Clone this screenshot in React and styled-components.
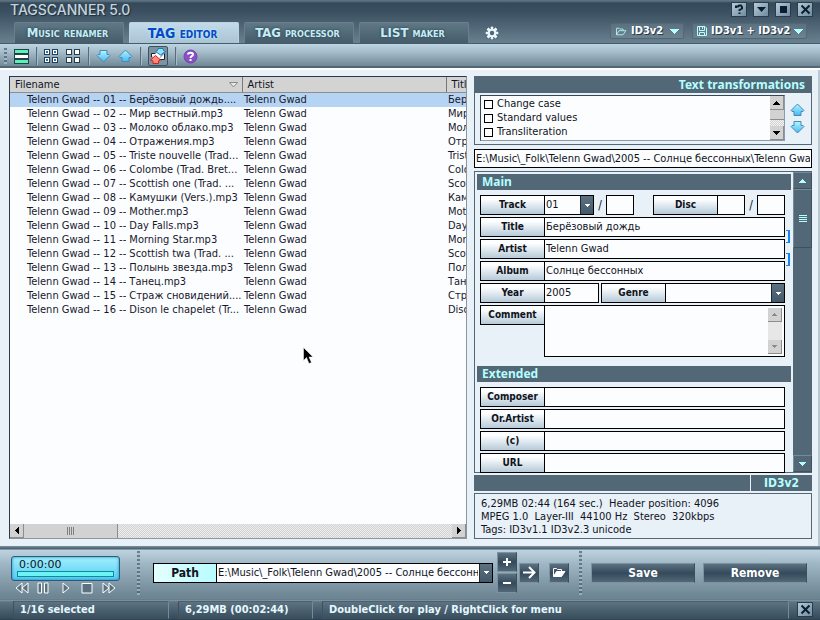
import React from "react";
import styled, { createGlobalStyle, css } from "styled-components";

const UI = `"DejaVu Sans Condensed", "Noto Sans", sans-serif`;
const HEADING = `"Noto Sans", sans-serif`;

const Global = createGlobalStyle`
  * { box-sizing: border-box; }
  body { margin: 0; font: 11px/14px ${UI}; color: #10131c; }
  button, input, select, textarea { font: inherit; color: inherit; margin: 0; padding: 0; border: 0; border-radius: 0; background: none; min-width: 0; outline: none; }
  button { cursor: default; }
  svg { display: block; flex: none; }
`;

const slate = "#536876";
const mint = "#b4ffff";

const Window = styled.div`
  min-height: 100vh;
  display: flex;
  flex-direction: column;
  background: #e8f0f8;
`;

/* ---------- header ---------- */
const Header = styled.header`
  height: 44px;
  display: flex;
  justify-content: space-between;
  background: linear-gradient(#5c7280 0, #5c7280 1px, #34495a 3px, #3b5060 12px, #6b8292 44px);
  border-bottom: 1px solid #475c6a;
`;
const HeaderSide = styled.div`
  display: flex;
  flex-direction: column;
  justify-content: space-between;
  align-items: ${(p) => (p.$right ? "flex-end" : "stretch")};
  padding: ${(p) => (p.$right ? "3px 8px 4px 0" : "2px 0 0 10px")};
`;
const Brand = styled.h1`
  margin: 0;
  font: 500 14px/16px Inter, sans-serif;
  color: #c3d3de;
  text-shadow: 1px 1px 1px #1b2b38;
`;
const Tabs = styled.nav`
  display: flex;
  gap: 5px;
  padding-left: 4px;
`;
const Tab = styled.button`
  && { padding-right: 3px; }
  width: 110px;
  height: 21px;
  font: bold ${(p) => (p.$active ? 14 : 13)}px/20px ${UI};
  font-variant: small-caps;
  color: ${(p) => (p.$active ? "#0848c8" : "#c4eef6")};
  text-shadow: ${(p) => (p.$active ? "0 0 3px #c0ffff" : "0 0 3px #203848")};
  background: ${(p) => (p.$active ? "linear-gradient(#c2dae9, #a9c4d4)" : "linear-gradient(#607886, #465c6a)")};
  border: 1px solid ${(p) => (p.$active ? "#bcd4e2" : "#687f8e")};
  border-bottom: 0;
  border-radius: 2px 2px 0 0;
`;
const GearButton = styled.button`
  && { margin-left: 10px; }
`;
const WinButtons = styled.div`
  display: flex;
  gap: 8px;
`;
const WinButton = styled.button`
  width: 14px;
  height: 13px;
  display: grid;
  place-items: center;
  && { color: #0b1c35; background: linear-gradient(135deg, #b6cbd9, #6f8b9c); }
  box-shadow: 0 0 0 1px #293c4b;
`;
const Modes = styled.div`
  display: flex;
  gap: 8px;
  margin-right: 5px;
`;
const Mode = styled.button`
  height: 16px;
  display: flex;
  align-items: center;
  gap: 4px;
  width: ${(p) => p.$w}px;
  white-space: nowrap;
  && {
    padding: 0 4px;
    font-weight: bold;
    color: #fff;
    text-shadow: 1px 1px 0 #283a48;
    background: linear-gradient(#5b7180, #6d8392);
    border: 1px solid #526875;
    border-radius: 2px;
  }
  svg { color: ${mint}; }
  svg:last-child { margin-left: auto; }
`;

/* ---------- toolbar ---------- */
const Toolbar = styled.div`
  height: 26px;
  display: flex;
  align-items: center;
  padding: 0 4px;
  gap: 7px;
  background: linear-gradient(#bdd4e2 0, #a5bdcb 8px, #718997 22px);
  border-bottom: 2px solid #fff;
  box-shadow: inset 0 -2px 0 #536876;
`;
const Tool = styled.button`
  width: ${(p) => (p.$on ? 20 : 15)}px;
  height: 20px;
  display: grid;
  place-items: center;
  ${(p) => p.$on && css`&& { background: #7d93a2; border: 1px solid #3e5361; border-radius: 2px; }`}
`;
const Divider = styled.i`
  width: 1px;
  height: 18px;
  background: #566c7a;
  box-shadow: 1px 0 0 #a7bdca;
`;
const Grip = styled.i`
  width: 3px;
  height: ${(p) => p.$h}px;
  background: repeating-linear-gradient(#485d6b 0 2px, #a9bfcc 2px 4px);
  opacity: 0.7;
`;

/* ---------- main ---------- */
const Main = styled.main`
  flex: 1;
  display: grid;
  grid-template-columns: minmax(0, 1fr) 338px;
  gap: 7px;
  padding: 6px 8px 7px 9px;
  box-shadow: inset -2px 0 0 #b9c9d4;
`;
const FilePane = styled.section`
  display: flex;
  flex-direction: column;
  overflow: hidden;
  background: #fcfdff;
  border: 1px solid #8a97a2;
  border-top-color: #2c3a46;
  border-left-color: #2c3a46;
`;
const TableArea = styled.div`
  flex: 1;
  overflow: hidden;
`;
const Files = styled.table`
  width: 100%;
  table-layout: fixed;
  border-collapse: collapse;
`;
const HeadCell = styled.th`
  ${(p) => p.$w && `width: ${p.$w}px; border-right: 1px solid #777;`}
  height: 15px;
  padding: 1px 4px 0 5px;
  overflow: hidden;
  text-align: left;
  font-weight: normal;
  background: #d3d3d3;
  border-bottom: 1px solid #8e8e8e;
  line-height: 13px;
`;
const HeadText = styled.span`
  display: flex;
  justify-content: space-between;
  align-items: center;
`;
const FileRow = styled.tr`
  background: ${(p) => (p.$selected ? "#b5d3f2" : "transparent")};
`;
const Cell = styled.td`
  height: 14px;
  line-height: 14px;
  padding: 0 0 0 ${(p) => (p.$first ? 17 : 2)}px;
  overflow: hidden;
  white-space: nowrap;
  color: #17182c;
`;
const HScroll = styled.div`
  height: 14px;
  display: flex;
  background: repeating-conic-gradient(#d2d2d2 0 25%, #ededed 0 50%) 0 0 / 2px 2px;
`;
const ScrollBtn = styled.button`
  width: 14px;
  height: 14px;
  display: grid;
  place-items: center;
  && {
    background: #d2d2d2;
    border-right: 1px solid #8d8d8d;
    border-bottom: 1px solid #8d8d8d;
    color: ${(p) => (p.$dim ? "#8a8a8a" : "#000")};
  }
`;
const HThumb = styled.div`
  width: 94px;
  margin-right: auto;
  display: grid;
  place-items: center;
  background: #d2d2d2;
  border-right: 1px solid #8d8d8d;
`;

const Side = styled.section`
  display: flex;
  flex-direction: column;
`;
const Transform = styled.div`
  border: 1px solid ${slate};
`;
const Bar = styled.h2`
  margin: 0;
  height: 16px;
  padding: 0 6px 0 5px;
  font: bold 12px/16px ${HEADING};
  color: ${mint};
  background: ${slate};
  text-align: ${(p) => (p.$right ? "right" : "left")};
`;
const TransformBody = styled.div`
  display: flex;
  padding: 2px 5px 3px;
  gap: 4px;
`;
const OptionBox = styled.div`
  flex: 1;
  display: flex;
  height: 46px;
  background: #fcfdff;
  border: 1px solid #8b9ba8;
  border-top-color: #35485a;
  border-left-color: #35485a;
`;
const Options = styled.div`
  flex: 1;
  padding: 1px 3px;
`;
const Option = styled.label`
  height: 14px;
  display: flex;
  align-items: center;
  gap: 4px;
`;
const Check = styled.input`
  appearance: none;
  width: 9px;
  height: 9px;
  && { border: 1px solid #000; background: #fff; }
`;
const VScroll = styled.div`
  width: 14px;
  display: flex;
  flex-direction: column;
  justify-content: space-between;
  background: ${(p) => (p.$plain ? "#e7e7e7" : "repeating-conic-gradient(#d2d2d2 0 25%, #f2f2f2 0 50%) 0 0 / 2px 2px")};
`;
const VThumb = styled.div`
  height: 10px;
  margin-bottom: auto;
  background: #d2d2d2;
  border-bottom: 1px solid #8d8d8d;
`;
const MoveButtons = styled.div`
  width: 17px;
  display: flex;
  flex-direction: column;
  align-items: center;
  justify-content: center;
  gap: 3px;
`;
const PathField = styled.input`
  && {
    height: 19px;
    margin: 4px 0 3px;
    padding: 0 1px;
    background: #fcfdff;
    border: 1px solid #000;
  }
`;
const Editor = styled.div`
  flex: 1;
  display: flex;
  border: 1px solid ${slate};
  border-right: 0;
`;
const Form = styled.form`
  flex: 1;
  min-width: 0;
  padding: 2px 2px 0;
  display: flex;
  flex-direction: column;
`;
const Group = styled.div`
  display: flex;
  flex-direction: column;
  gap: 2px;
  padding: 5px 6px ${(p) => (p.$last ? 0 : 9)}px 3px;
  ${(p) => p.$last && "margin-bottom: -1px;"}
`;
const Row = styled.div`
  display: flex;
  align-items: ${(p) => (p.$top ? "flex-start" : "stretch")};
  height: ${(p) => (p.$top ? 52 : 20)}px;
`;
const Caption = styled.label`
  width: 65px;
  height: 20px;
  flex: none;
  margin-left: ${(p) => p.$gap || 0}px;
  border: 1px solid #000;
  background: linear-gradient(#fcfeff 20%, #b6cad8);
  text-align: center;
  font: bold 10px/17px ${UI};
`;
const Field = styled.input`
  && {
    ${(p) => (p.$w ? `width: ${p.$w}px;` : "flex: 1;")}
    padding: 0 1px;
    background: #fcfdff;
    border: 1px solid #000;
    ${(p) => !p.$free && "border-left: 0;"}
  }
`;
const Slash = styled.span`
  width: 12px;
  padding-top: 3px;
  text-align: center;
  font-size: 12px;
`;
const Combo = styled.div`
  ${(p) => (p.$w ? `width: ${p.$w}px;` : "flex: 1;")}
  min-width: 0;
  display: flex;
  background: #fcfdff;
  border: 1px solid #000;
  border-left: 0;
`;
const ComboInput = styled.input`
  && { flex: 1; width: 0; padding: 0 1px; }
`;
const ComboButton = styled.button`
  width: 13px;
  display: grid;
  place-items: center;
  && { color: #fff; background: linear-gradient(#5d7280, #44586a); border-left: 1px solid #1c2a35; }
`;
const Comment = styled.div`
  flex: 1;
  height: 52px;
  display: flex;
  margin-left: -1px;
  padding: 2px;
  background: #fcfdff;
  border: 1px solid #000;
`;
const CommentText = styled.textarea`
  flex: 1;
  resize: none;
`;
const Rail = styled.div`
  width: 19px;
  display: flex;
  flex-direction: column;
  background: ${slate};
  color: ${mint};
`;
const RailPart = styled.button`
  height: ${(p) => p.$h}px;
  display: grid;
  place-items: center;
  && { border: 1px solid #3d515f; border-top-color: #768b99; border-left-color: #768b99; }
  &&:last-child { margin-top: auto; }
`;
const Format = styled.div`
  height: 16px;
  margin: 2px 0;
  display: flex;
  justify-content: flex-end;
  background: ${slate};
`;
const FormatName = styled.span`
  width: 62px;
  border-left: 1px solid #e8f0f8;
  text-align: center;
  font: bold 12px/16px ${UI};
  color: ${mint};
`;
const Info = styled.p`
  margin: 0;
  padding: 3px 5px 2px 6px;
  line-height: 13px;
  border: 1px solid ${slate};
  white-space: pre-line;
`;
/* brackets that join neighbouring fields, drawn over the form edge */
const Linked = styled.div`
  position: relative;
  display: flex;
  flex-direction: column;
  gap: 2px;
`;
const Bracket = styled.span`
  position: absolute;
  right: -5px;
  top: ${(p) => p.$top}px;
  width: 4px;
  height: 13px;
  border: 1px solid #1684f0;
  border-left: 0;
  border-right-width: 2px;
`;

/* ---------- bottom ---------- */
const Dock = styled.section`
  height: 53px;
  display: flex;
  align-items: center;
  padding: 0 13px 0 11px;
  background: linear-gradient(#7c919f 0, #465b69 3px, #bdd3e0 4px, #9fb6c4 18px, #6e8594 50px);
`;
const Player = styled.div`
  width: 109px;
  margin: 6px 17px 0 0;
`;
const Lcd = styled.div`
  height: 25px;
  padding: 1px 7px;
  display: flex;
  flex-direction: column;
  justify-content: space-between;
  background: linear-gradient(#9ff0fb, #57cbf6);
  border: 1px solid #275e80;
  border-radius: 3px;
  box-shadow: inset 0 0 3px #2a7fae;
  font: 11px/13px "DejaVu Sans", sans-serif;
`;
const Seek = styled.span`
  height: 6px;
  margin: 0 -2px 2px;
  background: #6df2f5;
  border: 1px solid #0b8d96;
`;
const Transport = styled.div`
  display: flex;
  justify-content: space-between;
  padding: 1px 4px 0;
`;
const PathCombo = styled.div`
  flex: 1;
  min-width: 0;
  display: flex;
  height: 20px;
  margin-left: 13px;
`;
const PathLabel = styled.label`
  width: 64px;
  flex: none;
  text-align: center;
  font: bold 12px/18px ${UI};
  border: 1px solid #000;
  background: linear-gradient(90deg, #e4ffff, #b8fcff);
`;
const Stack = styled.div`
  display: flex;
  flex-direction: column;
  gap: 1px;
  margin: 0 2px 0 4px;
`;
const DarkButton = styled.button`
  height: 20px;
  width: ${(p) => p.$w || 20}px;
  display: grid;
  place-items: center;
  && {
    margin: 0 ${(p) => p.$mr || 0}px 0 ${(p) => p.$ml || 0}px;
    font: bold 12px/18px ${UI};
    color: #fff;
    background: linear-gradient(#5c7281, #34495a 50%, #536978);
    border: 1px solid #7c92a0;
    border-right-color: #3b4f5d;
  }
`;
const Status = styled.footer`
  height: 22px;
  display: flex;
  align-items: center;
  gap: 9px;
  padding: 0 8px 1px 13px;
  font: bold 11px/18px ${UI};
  color: #e6f8ff;
  background: linear-gradient(#4c6170 0, #8299a7 1px, #5d7382 3px, #34495a 20px, #1d2c38 22px);
`;
const StatusCell = styled.span`
  ${(p) => (p.$w ? `width: ${p.$w}px;` : "flex: 1;")}
  height: 18px;
  padding: 0 6px;
  white-space: nowrap;
  border: 1px solid #3d515f;
  border-right-color: #758b99;
  border-top-color: #4c6170;
  line-height: 16px;
  background: linear-gradient(#5d7382, #3a4f5e);
`;

/* ---------- drawings ---------- */
const Tri = ({ dir = "down", w = 7, h = 4 }) => (
  <svg width={w} height={h} viewBox={`0 0 ${w} ${h}`} fill="currentColor" shapeRendering="crispEdges">
    {dir === "down" && <path d={`M0 0H${w}L${w / 2} ${h}Z`} />}
    {dir === "up" && <path d={`M0 ${h}H${w}L${w / 2} 0Z`} />}
    {dir === "left" && <path d={`M${w} 0V${h}L0 ${h / 2}Z`} />}
    {dir === "right" && <path d={`M0 0V${h}L${w} ${h / 2}Z`} />}
  </svg>
);
const Arrow = ({ up }) => (
  <svg width="15" height="14" viewBox="0 0 15 14">
    <defs>
      <linearGradient id="sky" x1="0" x2="0" y1="0" y2="1">
        <stop offset="0" stopColor="#b4f6ff" />
        <stop offset="1" stopColor="#44b8f4" />
      </linearGradient>
    </defs>
    <path
      d={up ? "M7.500 1 14 7.500 13 8.500H11V12.500H4V8.500H2L1 7.500Z" : "M7.500 13 14 6.500 13 5.500H11V1.500H4V5.500H2L1 6.500Z"}
      fill="url(#sky)"
      stroke="#4a88b4"
    />
  </svg>
);
const ListIcon = () => (
  <svg width="15" height="15" shapeRendering="crispEdges">
    {[["#56f4b0", 0], ["#fff", 5], ["#56f4b0", 10]].map(([c, y]) => (
      <g key={y}>
        <rect y={y} width="15" height="5" fill="#23404c" />
        <rect x="1" y={y + 1} width="13" height="3" fill={c} />
      </g>
    ))}
  </svg>
);
const GridIcon = ({ dots }) => (
  <svg width="15" height="15" shapeRendering="crispEdges">
    {[[0, 0], [8, 0], [0, 8], [8, 8]].map(([x, y]) => (
      <g key={`${x}${y}`}>
        <rect x={x + 0.5} y={y + 0.5} width="5" height="5" fill="#fff" stroke="#273e4d" />
        {dots && <rect x={x + 2} y={y + 2} width="2" height="2" fill="#1474dc" />}
      </g>
    ))}
  </svg>
);
const SyncIcon = () => (
  <svg width="16" height="16" viewBox="0 0 16 16">
    <path d="M6.500 5.500H1.500V9M8.500 11.500H14.500V5.500" fill="#fff" stroke="#17232c" />
    <path d="M2 9 7 4H13L9 11Z" fill="#fff" />
    <path d="M10.500 7 5.500 3.500 7.500 2.500 8 .5H13L13.500 2.500 15.500 3.500Z" fill="#8ae6ff" stroke="#2678ae" />
    <path d="M5.500 7.500 10.500 12 8.500 13V15.500H3V13L.5 12Z" fill="#ff8a7a" stroke="#d3201c" />
  </svg>
);
const HelpIcon = () => (
  <svg width="15" height="15" viewBox="0 0 15 15">
    <circle cx="7.500" cy="7.500" r="6.500" fill="#8a50c8" stroke="#7444ac" />
    <path d="M5 5.500C5 3 10 3 10 5.500 10 7.200 7.500 7 7.500 9" fill="none" stroke="#fff" strokeWidth="2" />
    <rect x="6.500" y="10" width="2" height="2" fill="#fff" />
  </svg>
);
const GearIcon = () => (
  <svg width="16" height="16" viewBox="-8 -8 16 16">
    <g fill="#e9f6fc" stroke="#263b49" strokeWidth="1" paintOrder="stroke">
      {[0, 45, 90, 135].map((a) => (
        <rect key={a} x="-1.500" y="-6.500" width="3" height="13" transform={`rotate(${a})`} />
      ))}
    </g>
    <circle r="4.300" fill="#e9f6fc" />
    <circle r="2.200" fill="#4f6675" />
  </svg>
);
const FolderIcon = ({ color = mint, fill = "none", w = 14 }) => (
  <svg width={w} height={w - 3} viewBox="0 0 14 11" fill="none" stroke={color}>
    <path d="M1.500 9.500V1.500H4.500L5.500 2.500H9.500V4.500" />
    <path d="M1.500 9.500 4.500 4.500H13L9.500 9.500Z" fill={fill} />
  </svg>
);
const DiskIcon = () => (
  <svg width="10" height="10" viewBox="0 0 10 10" fill="none" stroke={mint}>
    <path d="M.5.5H8L9.500 2V9.500H.5ZM2.500 .5V4.500H7.500V.5M5.500 1V3M2.500 9.500V6.500H7.500V9.500" />
  </svg>
);
const glyphs = {
  Help: <path d="M2 4V2.500H4L5 1.500H7L8 3V4.500L5.500 6V7M5.500 8.500V10" />,
  Minimize: <path d="M1 3H10L5.500 8Z" fill="currentColor" strokeWidth="0" />,
  Maximize: <path d="M2 2H9V9H2Z" fill="currentColor" strokeWidth="0" />,
  Close: <path d="M1.500 1.500 9.500 9.500M9.500 1.500 1.500 9.500" />,
};
const WinGlyph = ({ name }) => (
  <svg width="11" height="11" viewBox="0 0 11 11" fill="none" stroke="currentColor" strokeWidth="2">{glyphs[name]}</svg>
);
const transport = {
  Previous: "M7 1V11L1 6ZM13 1V11L7 6Z",
  Pause: "M1 1H4.500V11H1ZM7.500 1H11V11H7.500Z",
  Play: "M4 1V11L10 6Z",
  Stop: "M2 1.500H12V11H2Z",
  Next: "M1 1V11L7 6ZM7 1V11L13 6Z",
};

const files = [
  ["01 -- Берёзовый дождь....", "Бер"],
  ["02 -- Мир вестный.mp3", "Мир"],
  ["03 -- Молоко облако.mp3", "Мол"],
  ["04 -- Отражения.mp3", "Отр"],
  ["05 -- Triste nouvelle (Trad...", "Trist"],
  ["06 -- Colombe (Trad. Bret...", "Colo"],
  ["07 -- Scottish one (Trad. ...", "Scot"],
  ["08 -- Камушки (Vers.).mp3", "Кам"],
  ["09 -- Mother.mp3", "Mot"],
  ["10 -- Day Falls.mp3", "Day"],
  ["11 -- Morning Star.mp3", "Mor"],
  ["12 -- Scottish twa (Trad. ...", "Scot"],
  ["13 -- Полынь звезда.mp3", "Пол"],
  ["14 -- Танец.mp3", "Тан"],
  ["15 -- Страж сновидений....", "Стр"],
  ["16 -- Dison le chapelet (Tr...", "Diso"],
];

const TextRow = ({ id, name, value = "" }) => (
  <Row>
    <Caption htmlFor={id}>{name}</Caption>
    <Field id={id} defaultValue={value} />
  </Row>
);

const Cursor = styled.svg`
  position: absolute;
  left: 303px;
  top: 347px;
`;

export default function App() {
  return (
    <Window>
      <Global />
      <Header>
        <HeaderSide>
          <Brand>TAGSCANNER 5.0</Brand>
          <Tabs>
            <Tab>Music renamer</Tab>
            <Tab $active>TAG editor</Tab>
            <Tab>TAG processor</Tab>
            <Tab>LIST maker</Tab>
            <GearButton aria-label="Options"><GearIcon /></GearButton>
          </Tabs>
        </HeaderSide>
        <HeaderSide $right>
          <WinButtons>
            {Object.keys(glyphs).map((n) => (
              <WinButton key={n} aria-label={n}><WinGlyph name={n} /></WinButton>
            ))}
          </WinButtons>
          <Modes>
            <Mode $w={74}><FolderIcon w={12} /><span>ID3v2</span><Tri w={9} h={5} /></Mode>
            <Mode $w={115}><DiskIcon /><span>ID3v1 + ID3v2</span><Tri w={9} h={5} /></Mode>
          </Modes>
        </HeaderSide>
      </Header>

      <Toolbar>
        <Grip $h={16} />
        <Tool aria-label="List view"><ListIcon /></Tool>
        <Divider />
        <Tool aria-label="Select all"><GridIcon dots /></Tool>
        <Tool aria-label="Select none"><GridIcon /></Tool>
        <Divider />
        <Tool aria-label="Move down"><Arrow /></Tool>
        <Tool aria-label="Move up"><Arrow up /></Tool>
        <Divider />
        <Tool $on aria-label="Synchronize"><SyncIcon /></Tool>
        <Divider />
        <Tool aria-label="Help"><HelpIcon /></Tool>
      </Toolbar>

      <Main>
        <FilePane>
          <TableArea>
            <Files>
              <thead>
                <tr>
                  <HeadCell $w={232}><HeadText>Filename<svg width="9" height="6"><path d="M.5.5H8.500L4.500 5Z" fill="#e8e8e8" stroke="#8a8a8a" /></svg></HeadText></HeadCell>
                  <HeadCell $w={204}>Artist</HeadCell>
                  <HeadCell>Title</HeadCell>
                </tr>
              </thead>
              <tbody>
                {files.map(([file, title], i) => (
                  <FileRow key={file} $selected={i === 0}>
                    <Cell $first>Telenn Gwad -- {file}</Cell>
                    <Cell>Telenn Gwad</Cell>
                    <Cell>{title}</Cell>
                  </FileRow>
                ))}
              </tbody>
            </Files>
          </TableArea>
          <HScroll>
            <ScrollBtn aria-label="Scroll left"><Tri dir="left" w={4} h={7} /></ScrollBtn>
            <HThumb>
              <svg width="8" height="8" stroke="#808080" shapeRendering="crispEdges"><path d="M.5 0V8M2.500 0V8M4.500 0V8M6.500 0V8" /></svg>
            </HThumb>
            <ScrollBtn aria-label="Scroll right"><Tri dir="right" w={4} h={7} /></ScrollBtn>
          </HScroll>
        </FilePane>

        <Side>
          <Transform>
            <Bar $right>Text transformations</Bar>
            <TransformBody>
              <OptionBox>
                <Options>
                  {["Change case", "Standard values", "Transliteration"].map((t) => (
                    <Option key={t}><Check type="checkbox" />{t}</Option>
                  ))}
                </Options>
                <VScroll>
                  <ScrollBtn aria-label="Up"><Tri dir="up" /></ScrollBtn>
                  <VThumb />
                  <ScrollBtn aria-label="Down"><Tri /></ScrollBtn>
                </VScroll>
              </OptionBox>
              <MoveButtons>
                <button aria-label="Raise"><Arrow up /></button>
                <button aria-label="Lower"><Arrow /></button>
              </MoveButtons>
            </TransformBody>
          </Transform>
          <PathField aria-label="File path" defaultValue="E:\Music\_Folk\Telenn Gwad\2005 -- Солнце бессонных\Telenn Gwad" />
          <Editor>
            <Form>
              <Bar>Main</Bar>
              <Group>
                <Row>
                  <Caption htmlFor="track">Track</Caption>
                  <Combo $w={49}>
                    <ComboInput id="track" defaultValue="01" />
                    <ComboButton type="button" aria-label="Choose track"><Tri w={5} h={3} /></ComboButton>
                  </Combo>
                  <Slash>/</Slash>
                  <Field $w={28} $free aria-label="Track total" />
                  <Caption htmlFor="disc" $gap={19}>Disc</Caption>
                  <Field id="disc" $w={27} />
                  <Slash>/</Slash>
                  <Field $free aria-label="Disc total" />
                </Row>
                <Linked>
                  <TextRow id="title" name="Title" value="Берёзовый дождь" />
                  <TextRow id="artist" name="Artist" value="Telenn Gwad" />
                  <TextRow id="album" name="Album" value="Солнце бессонных" />
                  <Bracket $top={13} />
                  <Bracket $top={36} />
                </Linked>
                <Row>
                  <Caption htmlFor="year">Year</Caption>
                  <Field id="year" $w={54} defaultValue="2005" />
                  <Caption htmlFor="genre" $gap={2}>Genre</Caption>
                  <Combo>
                    <ComboInput id="genre" />
                    <ComboButton type="button" aria-label="Choose genre"><Tri w={5} h={3} /></ComboButton>
                  </Combo>
                </Row>
                <Row $top>
                  <Caption htmlFor="comment">Comment</Caption>
                  <Comment>
                    <CommentText id="comment" />
                    <VScroll $plain>
                      <ScrollBtn type="button" $dim aria-label="Up"><Tri dir="up" w={5} h={3} /></ScrollBtn>
                      <ScrollBtn type="button" $dim aria-label="Down"><Tri w={5} h={3} /></ScrollBtn>
                    </VScroll>
                  </Comment>
                </Row>
              </Group>
              <Bar>Extended</Bar>
              <Group $last>
                <TextRow id="composer" name="Composer" />
                <TextRow id="orartist" name="Or.Artist" />
                <TextRow id="copyright" name="(c)" />
                <TextRow id="url" name="URL" />
              </Group>
            </Form>
            <Rail>
              <RailPart $h={17} aria-label="Scroll up"><Tri dir="up" /></RailPart>
              <RailPart $h={59} aria-label="Scroll position">
                <svg width="8" height="7" stroke="currentColor" shapeRendering="crispEdges"><path d="M0 .5H8M0 2.500H8M0 4.500H8M0 6.500H8" /></svg>
              </RailPart>
              <RailPart $h={17} aria-label="Scroll down"><Tri /></RailPart>
            </Rail>
          </Editor>
          <Format><FormatName>ID3v2</FormatName></Format>
          <Info>
            {"6,29MB 02:44 (164 sec.)\u00a0 Header position: 4096\nMPEG 1.0\u00a0 Layer-III\u00a0 44100 Hz\u00a0 Stereo\u00a0 320kbps\nTags: ID3v1.1 ID3v2.3 unicode"}
          </Info>
        </Side>
      </Main>

      <Dock>
        <Player>
          <Lcd>0:00:00<Seek /></Lcd>
          <Transport>
            {Object.entries(transport).map(([n, d]) => (
              <button key={n} aria-label={n}>
                <svg width="14" height="13" viewBox="0 0 14 13"><path d={d} fill="#5b7180" stroke="#fff" /></svg>
              </button>
            ))}
          </Transport>
        </Player>
        <Grip $h={44} />
        <PathCombo>
          <PathLabel htmlFor="path">Path</PathLabel>
          <Combo>
            <ComboInput id="path" defaultValue="E:\Music\_Folk\Telenn Gwad\2005 -- Солнце бессонных" />
            <ComboButton aria-label="Recent paths"><Tri w={5} h={3} /></ComboButton>
          </Combo>
        </PathCombo>
        <Stack>
          <DarkButton aria-label="Add path"><svg width="8" height="8" stroke="#fff" strokeWidth="2"><path d="M4 0V8M0 4H8" /></svg></DarkButton>
          <DarkButton aria-label="Remove path"><svg width="8" height="2"><path d="M0 0H8V2H0Z" fill="#fff" /></svg></DarkButton>
        </Stack>
        <DarkButton aria-label="Go" $mr={10}>
          <svg width="14" height="13" viewBox="0 0 14 13" fill="none" stroke="#fff" strokeWidth="2"><path d="M1 6.500H12M7 1 12.500 6.500 7 12" /></svg>
        </DarkButton>
        <DarkButton aria-label="Browse" $mr={10}><FolderIcon color="#fff" fill="#fff" /></DarkButton>
        <Grip $h={44} />
        <DarkButton $w={104} $ml={9} $mr={8}>Save</DarkButton>
        <DarkButton $w={104}>Remove</DarkButton>
      </Dock>

      <Status>
        <StatusCell $w={156}>1/16 selected</StatusCell>
        <StatusCell $w={135}>6,29MB (00:02:44)</StatusCell>
        <StatusCell>DoubleClick for play / RightClick for menu</StatusCell>
        <WinButton aria-label="Close"><WinGlyph name="Close" /></WinButton>
      </Status>

      <Cursor width="11" height="18" viewBox="0 0 11 18">
        <path d="M.5.5V13.500L3.500 10.500 6 16.500 8.500 15.500 6 10H10Z" fill="#000" stroke="#fff" strokeWidth="0.500" />
      </Cursor>
    </Window>
  );
}
